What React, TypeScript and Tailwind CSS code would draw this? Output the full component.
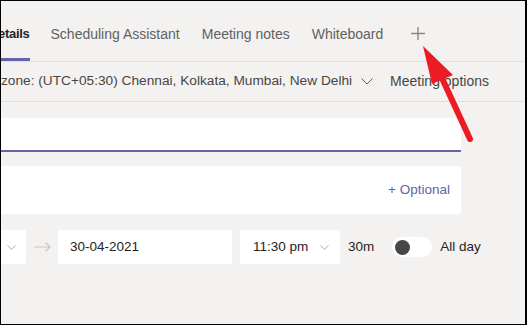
import React from "react";

const font = { fontFamily: '"Liberation Sans", Arial, sans-serif' };

const Chevron = ({ className }: { className?: string }) => (
  <svg className={className} width="12" height="7" viewBox="0 0 12 7" fill="none">
    <path d="M0.5 0.5 L6 6 L11.5 0.5" stroke="currentColor" strokeWidth="1" />
  </svg>
);

const App = () => {
  return (
    <div
      className="relative w-[527px] h-[325px] overflow-hidden bg-[#f3f2f1] border-l border-t border-b border-r-2 border-black text-[13.5px] whitespace-nowrap"
      style={font}
    >
      {/* tabs */}
      <div className="flex h-[60px] items-stretch -ml-[12px] text-[#616161] text-[14px]">
        <div className="flex items-center pt-[9px] border-b-[3px] border-[#6264a7] font-bold text-[#252423] text-[13px] tracking-[-0.3px]">
          Details
        </div>
        <div className="ml-[21px] flex items-center pt-[9px] border-b-[3px] border-transparent">Scheduling Assistant</div>
        <div className="ml-[22px] flex items-center pt-[9px] border-b-[3px] border-transparent">Meeting notes</div>
        <div className="ml-[22px] flex items-center pt-[9px] border-b-[3px] border-transparent">Whiteboard</div>
        <div className="ml-[28px] flex items-center pt-[8px] border-b-[3px] border-transparent text-[#8a8886]">
          <svg width="14" height="13" viewBox="0 0 14 13">
            <path d="M7 0 V13 M0 6.5 H14" stroke="currentColor" strokeWidth="1.4" />
          </svg>
        </div>
      </div>
      <div className="h-px bg-[#e1dfdd]" />

      {/* time zone row */}
      <div className="flex h-[39px] items-center text-[#484644] text-[13.7px]">
        <span>zone: (UTC+05:30) Chennai, Kolkata, Mumbai, New Delhi</span>
        <Chevron className="ml-[9px] text-[#605e5c]" />
        <span className="ml-[17px] text-[14px]">Meeting options</span>
      </div>
      <div className="h-px bg-[#e1dfdd]" />

      {/* form */}
      <div className="w-[460px] flex flex-col pt-[16px]">
        <div className="h-[34px] bg-white border-b-2 border-[#6264a7]" />
        <div className="mt-[14px] h-[48px] bg-white rounded-r-[2px] flex items-center justify-end pr-[11px] text-[#6264a7]">
          + Optional
        </div>
        <div className="mt-[16px] h-[34px] w-max flex items-center text-[#252423]">
          <div className="shrink-0 w-[25px] h-full bg-white rounded-r-[2px] flex items-center pl-[6px] text-[#8a8886]">
            <Chevron className="w-[9px] h-[5px]" />
          </div>
          <div className="shrink-0 ml-[8px] w-[24px] flex items-center text-[#c8c6c4]">
            <svg width="17" height="10" viewBox="0 0 17 10" fill="none">
              <path d="M0 5 H16 M11.5 0.5 L16 5 L11.5 9.5" stroke="currentColor" strokeWidth="1.2" />
            </svg>
          </div>
          <div className="shrink-0 w-[174px] h-full bg-white rounded-[2px] flex items-center pl-[12px]">30-04-2021</div>
          <div className="shrink-0 ml-[8px] w-[100px] h-full bg-white rounded-[2px] flex items-center pl-[13px]">
            <span>11:30 pm</span>
            <Chevron className="ml-[12px] w-[9px] h-[5px] text-[#8a8886]" />
          </div>
          <span className="shrink-0 ml-[8px]">30m</span>
          <div className="shrink-0 ml-[18px] w-[40px] h-[20px] rounded-full bg-white flex items-center pl-[3px]">
            <div className="w-[15px] h-[15px] rounded-full bg-[#484644]" />
          </div>
          <span className="shrink-0 ml-[8px]">All day</span>
        </div>
      </div>

      {/* red annotation arrow */}
      <svg className="absolute left-0 top-0 pointer-events-none" width="527" height="325" viewBox="-1 -1 527 325">
        <polygon points="421,44 430,82 451,73" fill="#ec1c24" />
        <line x1="439" y1="74" x2="468" y2="137" stroke="#ec1c24" strokeWidth="6" strokeLinecap="round" />
      </svg>
    </div>
  );
};

export default App;
